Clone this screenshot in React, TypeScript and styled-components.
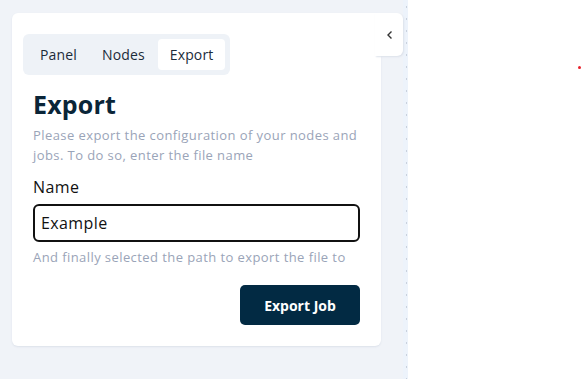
import styled, { createGlobalStyle } from 'styled-components';

const GlobalStyle = createGlobalStyle`
  html, body {
    margin: 0;
    padding: 0;
    width: 100%;
    height: 100%;
    overflow: hidden;
  }
  #root {
    height: 100%;
  }
  * {
    box-sizing: border-box;
  }
`

const tabs = ['Panel', 'Nodes', 'Export'];

export default function App() {
  return (
    <>
      <GlobalStyle/>
      <Page>
        <Sidebar>
          <Card>
            <CollapseButton>
              <svg width="10" height="10" viewBox="0 0 10 10">
                <path d="M6.5 1.5 L3 5 L6.5 8.5" fill="none" stroke="#333" strokeWidth="1.4"/>
              </svg>
            </CollapseButton>
            <Tabs>
              {tabs.map(tab => (
                <Tab key={tab} active={tab === 'Export'}>{tab}</Tab>
              ))}
            </Tabs>
            <Title>Export</Title>
            <Description>
              Please export the configuration of your nodes and jobs. To do so, enter the file name
            </Description>
            <Label>Name</Label>
            <NameInput defaultValue="Example" spellCheck/>
            <Hint>And finally selected the path to export the file to</Hint>
            <Actions>
              <ExportButton>Export Job</ExportButton>
            </Actions>
          </Card>
        </Sidebar>
        <Divider/>
        <Canvas>
          <Marker/>
        </Canvas>
      </Page>
    </>
  )
}

const Page = styled.div`
  display: flex;
  flex-direction: row;
  width: 100%;
  height: 100%;
  font-family: "Open Sans", "Liberation Sans", sans-serif;
`

const Sidebar = styled.div`
  width: 403px;
  flex-shrink: 0;
  background-color: #F0F3F8;
  padding: 13px 0 0 12px;
`

const Card = styled.div`
  position: relative;
  width: 369px;
  background-color: #FFFFFF;
  border-radius: 6px;
  padding: 21px 21px 21px 21px;
  box-shadow: 0px 1px 2px 0px #DCE1EA;
`

const CollapseButton = styled.div`
  position: absolute;
  top: 0;
  right: -22px;
  width: 28px;
  height: 43px;
  display: flex;
  justify-content: flex-end;
  align-items: center;
  padding-right: 8px;
  background-color: #FFFFFF;
  border-radius: 0 6px 6px 0;
  box-shadow: 1px 1px 2px 0px #DCE1EA;
`

const Tabs = styled.div`
  display: inline-flex;
  flex-direction: row;
  gap: 1px;
  margin-left: -10px;
  padding: 5px;
  background-color: #EEF2F7;
  border-radius: 6px;
`

const Tab = styled.div<{ active: boolean }>`
  height: 31px;
  display: flex;
  align-items: center;
  padding: 0 12px;
  font-size: 14px;
  letter-spacing: 0.15px;
  color: #1B2B3A;
  border-radius: 4px;
  background-color: ${props => props.active ? '#FFFFFF' : 'transparent'};
`

const Title = styled.h1`
  margin: 13px 0 0 0;
  font-size: 25px;
  line-height: 32px;
  font-weight: 700;
  letter-spacing: 0.2px;
  color: #0A2538;
`

const Description = styled.p`
  margin: 5px 0 0 0;
  font-size: 13px;
  line-height: 20px;
  letter-spacing: 0.42px;
  color: #9AA4B8;
`

const Label = styled.div`
  margin-top: 12px;
  font-size: 16px;
  line-height: 20px;
  letter-spacing: 0.4px;
  color: #111111;
`

const NameInput = styled.input`
  display: block;
  width: 100%;
  height: 38px;
  margin-top: 7px;
  padding: 0 6px;
  border: 2px solid #111111;
  border-radius: 6px;
  font-family: inherit;
  font-size: 16px;
  letter-spacing: 0.4px;
  color: #111111;
  outline: none;
`

const Hint = styled.div`
  margin-top: 6px;
  font-size: 13px;
  line-height: 18px;
  letter-spacing: 0.42px;
  color: #9AA4B8;
`

const Actions = styled.div`
  display: flex;
  justify-content: flex-end;
  margin-top: 19px;
`

const ExportButton = styled.button`
  width: 120px;
  height: 40px;
  border: none;
  border-radius: 5px;
  background-color: #022A43;
  color: #FFFFFF;
  font-family: inherit;
  font-size: 14px;
  font-weight: 700;
`

const Divider = styled.div`
  width: 5px;
  flex-shrink: 0;
  background-color: #EDF3FB;
  background-image: linear-gradient(#C9D1DD 0 2px, transparent 2px 12px);
  background-size: 1px 12px;
  background-position: 3px 6px;
  background-repeat: repeat-y;
`

const Canvas = styled.div`
  position: relative;
  flex: 1;
  background-color: #FFFFFF;
`

const Marker = styled.div`
  position: absolute;
  left: 170px;
  top: 66px;
  width: 3px;
  height: 3px;
  border-radius: 50%;
  background-color: #E8202A;
`
